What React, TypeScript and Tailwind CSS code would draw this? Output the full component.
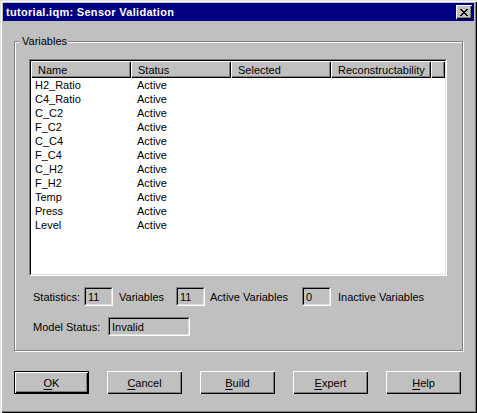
import React from 'react';

const rows: [string, string][] = [
  ['H2_Ratio', 'Active'],
  ['C4_Ratio', 'Active'],
  ['C_C2', 'Active'],
  ['F_C2', 'Active'],
  ['C_C4', 'Active'],
  ['F_C4', 'Active'],
  ['C_H2', 'Active'],
  ['F_H2', 'Active'],
  ['Temp', 'Active'],
  ['Press', 'Active'],
  ['Level', 'Active'],
];

const columns = ['Name', 'Status', 'Selected', 'Reconstructability'];

// classic raised / sunken bevels
const raised = 'shadow-[inset_1px_1px_#fff,inset_-1px_-1px_#000,inset_-2px_-2px_#808080]';
const headerCell = 'shadow-[inset_1px_1px_#fff,inset_-1px_-1px_#000,inset_-2px_-2px_#808080]';
const sunkenBox =
  'border-t border-l border-t-[#808080] border-l-[#808080] border-b border-r border-b-white border-r-white';
const sunkenInner =
  'border-t border-l border-t-black border-l-black border-b border-r border-b-[#dfdfdf] border-r-[#dfdfdf]';

const CloseGlyph = () => (
  <svg width="8" height="7" viewBox="0 0 8 7" shapeRendering="crispEdges">
    <path
      d="M0 0h2v1H0zM6 0h2v1H6zM1 1h2v1H1zM5 1h2v1H5zM2 2h4v1H2zM3 3h2v1H3zM2 4h4v1H2zM1 5h2v1H1zM5 5h2v1H5zM0 6h2v1H0zM6 6h2v1H6z"
      fill="#000"
    />
  </svg>
);

const ValueBox: React.FC<{ value: string; width: string }> = ({ value, width }) => (
  <div className={`${sunkenBox} h-[19px] ${width}`}>
    <div className={`${sunkenInner} h-full flex items-center pl-[2px] bg-[#c0c0c0]`}>{value}</div>
  </div>
);

const Button: React.FC<{ label: string; mnemonic: string; isDefault?: boolean }> = ({
  label,
  mnemonic,
  isDefault,
}) => {
  const rest = label.slice(1);
  const face = (
    <div className={`w-full h-full flex items-center justify-center ${raised}`}>
      <span>
        <u className="underline-offset-[2px]">{mnemonic}</u>
        {rest}
      </span>
    </div>
  );
  if (isDefault) {
    return <div className="w-[75px] h-[23px] border border-black bg-[#c0c0c0]">{face}</div>;
  }
  return <div className="w-[75px] h-[23px] bg-[#c0c0c0]">{face}</div>;
};

export default function App() {
  return (
    <div
      className="w-[477px] h-[413px] bg-[#c0c0c0] p-[3px] flex flex-col text-[11px] leading-[14px] text-black shadow-[inset_1px_1px_#dfdfdf,inset_2px_2px_#fff,inset_-1px_-1px_#000,inset_-2px_-2px_#808080]"
      style={{ fontFamily: '"Liberation Sans", Arial, sans-serif' }}
    >
      {/* title bar */}
      <div className="h-[18px] bg-[#000080] flex items-center justify-between pl-[3px] pr-[2px]">
        <span className="text-white font-bold tracking-[0.3px]">tutorial.iqm: Sensor Validation</span>
        <div className={`w-[16px] h-[14px] bg-[#c0c0c0] flex items-center justify-center ${raised}`}>
          <CloseGlyph />
        </div>
      </div>

      {/* Variables group */}
      <div className="relative mt-[20px] ml-[11px] w-[449px] h-[310px] border border-[#808080] shadow-[1px_1px_0_#fff,inset_1px_1px_0_#fff] pt-[17px] pl-[14px]">
        <span className="absolute left-[4px] top-[-8px] bg-[#c0c0c0] pl-[3px] pr-[1px]">Variables</span>

        <div className={`${sunkenBox} w-[418px] h-[217px]`}>
          <div className={`${sunkenInner} h-full bg-white flex flex-col`}>
            <div className="flex h-[17px] shrink-0">
              {columns.map((c) => (
                <div key={c} className={`w-[100px] h-full bg-[#c0c0c0] pl-[7px] flex items-center ${headerCell}`}>
                  {c}
                </div>
              ))}
              <div className={`flex-1 h-full bg-[#c0c0c0] ${headerCell}`} />
            </div>
            <div className="flex flex-col">
              {rows.map(([name, status]) => (
                <div key={name} className="flex h-[14px] items-center">
                  <div className="w-[100px] pl-[4px]">{name}</div>
                  <div className="w-[100px] pl-[6px]">{status}</div>
                </div>
              ))}
            </div>
          </div>
        </div>

        <div className="flex items-center mt-[11px] ml-[4px]">
          <span className="w-[51px]">Statistics:</span>
          <ValueBox value="11" width="w-[29px]" />
          <span className="w-[63px] pl-[6px]">Variables</span>
          <ValueBox value="11" width="w-[29px]" />
          <span className="w-[97px] pl-[5px]">Active Variables</span>
          <ValueBox value="0" width="w-[29px]" />
          <span className="pl-[7px]">Inactive Variables</span>
        </div>

        <div className="flex items-center mt-[11px] ml-[4px]">
          <span className="w-[75px]">Model Status:</span>
          <ValueBox value="Invalid" width="w-[82px]" />
        </div>
      </div>

      {/* buttons */}
      <div className="flex gap-[18px] mt-[20px] ml-[11px]">
        <Button label="OK" mnemonic="O" isDefault />
        <Button label="Cancel" mnemonic="C" />
        <Button label="Build" mnemonic="B" />
        <Button label="Expert" mnemonic="E" />
        <Button label="Help" mnemonic="H" />
      </div>
    </div>
  );
}
